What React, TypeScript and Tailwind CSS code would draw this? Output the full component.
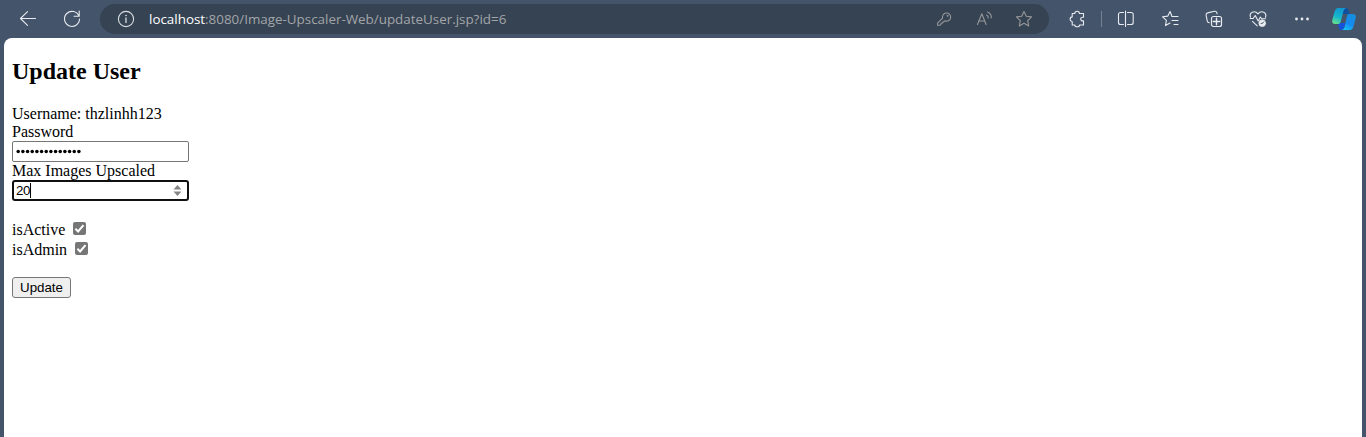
import type { ReactNode } from 'react';

function Icon({ children, className = '' }: { children: ReactNode; className?: string }) {
  return (
    <svg
      viewBox="0 0 20 20"
      fill="none"
      stroke="currentColor"
      strokeWidth="1.1"
      strokeLinecap="round"
      strokeLinejoin="round"
      className={`h-5 w-5 shrink-0 ${className}`}
    >
      {children}
    </svg>
  );
}

function AddressBar() {
  return (
    <div className="ml-[18px] flex h-[30px] w-[949px] items-center rounded-full bg-[#364353] pl-4 pr-[15px]">
      <Icon className="text-[#d9dde2]">
        <circle cx="10" cy="10" r="7.6" />
        <path d="M10 9v4.6" strokeWidth="1.3" />
        <circle cx="10" cy="6.6" r=".45" fill="currentColor" strokeWidth=".7" />
      </Icon>
      <div className="ml-[13px] flex-1 whitespace-nowrap font-['Open_Sans','Noto_Sans',sans-serif] text-[13.4px] leading-5 text-[#a3a5a8]">
        <span className="text-white">localhost</span>
        <span>:8080/Image-Upscaler-Web/updateUser.jsp?id=6</span>
      </div>
      <div className="flex gap-5 text-[#969799]">
        <Icon>
          <path d="M8.6 9.2a4.1 4.1 0 1 1 2.8 2.8l-1.2.1-.9 1-1 .1-.2 1.1-1.1.2-.2 1.1-1 .7H3.6v-2.1z" />
          <circle cx="13.6" cy="6.8" r=".4" fill="currentColor" />
        </Icon>
        <Icon>
          <path d="M3.5 15.5 7.8 4.8l4.3 10.7M5 12h5.8M12.6 6q1.8 1 1.6 3M13.6 3q4.2 2 3.6 6" />
        </Icon>
        <Icon>
          <path d="m10 2.4 2.3 4.8 5.3.7-3.9 3.7 1 5.3-4.7-2.6-4.7 2.6 1-5.3-3.9-3.7 5.3-.7z" />
        </Icon>
      </div>
    </div>
  );
}

function CopilotLogo() {
  return (
    <svg viewBox="0 0 26 24" className="ml-[19px] h-6 w-[26px] shrink-0">
      <defs>
        <linearGradient id="leftRibbon" x1=".6" y1="0" x2=".25" y2="1">
          <stop stopColor="#1296cf" />
          <stop offset=".55" stopColor="#15b5cf" />
          <stop offset="1" stopColor="#67e48a" />
        </linearGradient>
        <linearGradient id="rightRibbon" x1=".7" y1="0" x2=".3" y2="1">
          <stop stopColor="#168edb" />
          <stop offset=".6" stopColor="#1689f0" />
          <stop offset="1" stopColor="#15c0f5" />
        </linearGradient>
      </defs>
      <path d="M7 16h7.5l-1.8 5.4Q12 23 10.3 23C7.7 23 7.8 19 7 16" fill="#1553dc" />
      <path d="M12 1h3.5c2 0 2.2 3.8 3.2 6h-8z" fill="#104f9d" />
      <path d="M6.7 1H15q-2 1-2.5 3L9.8 14.5Q9.2 17 7 17H4.5Q.3 17 1.4 12.5L3.8 4Q4.7 1 6.7 1" fill="url(#leftRibbon)" />
      <path d="M17.3 7h4.2q4.3 0 3.1 4.4L22.3 20q-.8 3-3 3H11q2.1-1 2.6-3l2.3-10.5q.5-2.5 1.4-2.5" fill="url(#rightRibbon)" />
    </svg>
  );
}

function BrowserBar() {
  return (
    <div className="flex h-[38px] items-center bg-[#44546a] pl-[18px] text-[#e8ebef]">
      <Icon>
        <path d="M17.5 9.5H2.8M9.5 2.7 2.5 9.5l7 6.9" />
      </Icon>
      <Icon className="ml-6">
        <path d="M17 7.2A7.5 7.5 0 1 0 17.5 10M17.2 2v5.3h-5.1" />
      </Icon>
      <AddressBar />
      <Icon className="ml-[18px]">
        <path d="M5.2 4.5h2.6c0-3 4.6-3 4.6 0h4.1v3.8c-3.8-.8-3.8 4.3 0 3.5v4.2h-3.9c0 2.3-4.8 2.3-4.8 0H5.2v-3.5c-2.7 0-2.7-4.6 0-4.6z" />
      </Icon>
      <span className="ml-[14px] h-4 w-px bg-[#77818f]" />
      <Icon className="ml-[14px]">
        <path d="M7.5 3.5H4.5a2 2 0 0 0-2 2v8a2 2 0 0 0 2 2h3M11.5 3.5h3.7a2 2 0 0 1 2 2v8a2 2 0 0 1-2 2h-3.7M9.5 2v15.5" />
      </Icon>
      <Icon className="ml-6">
        <path d="m11.8 7-1.7-4.5-2.3 4.6-5.2.7 3.8 3.6-.9 5.2L10 14.1" />
        <path d="M12 7.5h6M12 11.5h6M14 15.5h4" strokeWidth="1.2" />
      </Icon>
      <Icon className="ml-6">
        <path d="M5.3 13.8c-1.2 0-1.8-.5-2-1.6L2.1 6.3c-.2-1.3.3-2.1 1.6-2.4l6.7-1.6c1.3-.3 2.1.2 2.5 1.5l.2 1" />
        <rect x="7.5" y="7.5" width="10" height="10" rx="2" strokeWidth="1.2" />
        <path d="M12.5 9.2v6.6M9.2 12.5h6.6" strokeWidth="1.4" />
      </Icon>
      <Icon className="ml-6">
        <path d="M2.5 8.2C.8 3.6 6.5.8 10 4.8c3.5-4 9.2-1.2 7.5 3.4M2.2 9.5h3l2-3 3 5.5 2.2-4 1.3 1.8h3.8M4.5 12.3l4.7 4.5" />
        <circle cx="14.2" cy="14.2" r="3.4" fill="currentColor" strokeWidth=".6" />
        <path d="m12.9 14.2.8.8 2-2.1" stroke="#44546a" strokeWidth="1" />
      </Icon>
      <Icon className="ml-6">
        <g fill="currentColor" stroke="none">
          <circle cx="4.5" cy="10" r="1.4" />
          <circle cx="10" cy="10" r="1.4" />
          <circle cx="15.5" cy="10" r="1.4" />
        </g>
      </Icon>
      <CopilotLogo />
    </div>
  );
}

function Check() {
  return (
    <span className="flex h-[13px] w-[13px] items-center justify-center rounded-[2px] bg-[#767676]">
      <svg viewBox="0 0 13 13" className="h-[13px] w-[13px]" fill="none" stroke="white" strokeWidth="2">
        <path d="m2.4 6.8 2.7 2.7 5.4-6.3" />
      </svg>
    </span>
  );
}

function UpdateForm() {
  return (
    <main className="h-[399px] rounded-t-lg bg-white pl-2 pt-5 font-['Liberation_Serif',serif] text-base leading-[18px] text-black">
      <h2 className="text-2xl font-bold leading-[27px]">Update User</h2>
      <div className="mt-5">Username: thzlinhh123</div>
      <div>Password</div>
      <div className="flex h-[21px] w-[177px] items-center rounded-[2px] border border-[#767676] pl-[3px]">
        <svg viewBox="0 0 68 5" className="h-[5px] w-[68px]" fill="black">
          {Array.from({ length: 14 }, (_, i) => (
            <circle key={i} cx={2.2 + i * 4.67} cy="2.5" r="1.75" />
          ))}
        </svg>
      </div>
      <div>Max Images Upscaled</div>
      <div className="flex h-[21px] w-[177px] items-center rounded-[3px] border-2 border-[#101010] pl-[2px] pr-[5px] font-['Liberation_Sans',sans-serif] text-[13.333px] leading-[15px]">
        <span className="w-[14px] tracking-[-0.4px]">20</span>
        <span className="h-[15px] w-px bg-black" />
        <svg viewBox="0 0 9 11" className="ml-auto h-[11px] w-[9px]" fill="#858585">
          <path d="m4.5 0 4 4.5h-8zM.5 6.5h8l-4 4.5z" />
        </svg>
      </div>
      <div className="mt-5 flex items-start gap-2">
        <span>isActive</span>
        <span className="pt-px"><Check /></span>
      </div>
      <div className="mt-[2px] flex items-start gap-2">
        <span>isAdmin</span>
        <span className="pt-px"><Check /></span>
      </div>
      <button className="mt-[18px] flex h-[21px] w-[59px] items-center justify-center rounded-[3px] border border-[#767676] bg-[#efefef] font-['Liberation_Sans',sans-serif] text-[13.333px] leading-[15px]">
        Update
      </button>
    </main>
  );
}

export default function App() {
  return (
    <div className="h-[437px] w-[1366px] overflow-hidden bg-[#44546a]">
      <BrowserBar />
      <div className="px-1">
        <UpdateForm />
      </div>
    </div>
  );
}
